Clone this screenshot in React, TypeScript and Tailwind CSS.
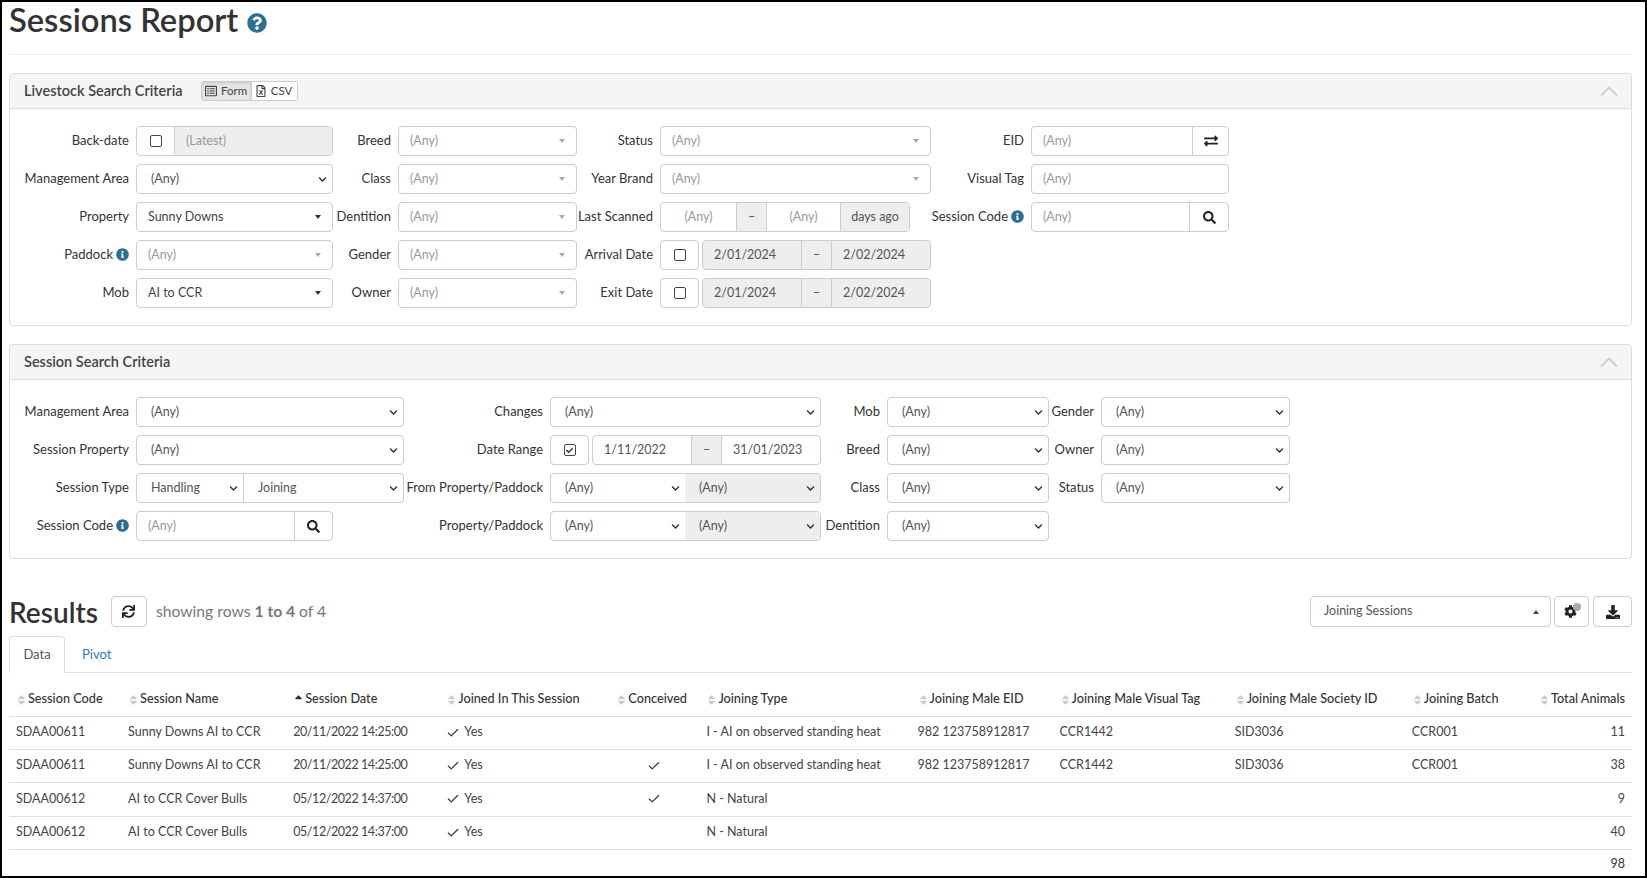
import type { ReactNode } from 'react';
import {
  FaCheck,
  FaChevronDown,
  FaCog,
  FaDownload,
  FaExchangeAlt,
  FaInfoCircle,
  FaQuestionCircle,
  FaRegFileExcel,
  FaRegListAlt,
  FaSearch,
  FaSort,
  FaSortUp,
  FaSync,
} from 'react-icons/fa';
import { Check } from 'lucide-react';

const box = 'h-[30px] border border-[#ccc] rounded-[4px] flex items-center text-[12.5px]';

function Label({ children, info }: { children: ReactNode; info?: boolean }) {
  return (
    <div className="h-[30px] flex items-center justify-end gap-[3px] pr-[7px] pb-[1px] text-[13px] text-[#333] whitespace-nowrap">
      {children}
      {info && <FaInfoCircle className="w-[13px] h-[13px] text-[#2e6f91]" />}
    </div>
  );
}

function Native({ value = '(Any)' }: { value?: string }) {
  return (
    <div className={`${box} bg-white justify-between pl-[14px] pr-[5px] text-[#555]`}>
      <span>{value}</span>
      <FaChevronDown className="w-[9px] h-[9px] text-[#333]" />
    </div>
  );
}

function Combo({ value, disabled }: { value?: string; disabled?: boolean }) {
  return (
    <div className={`${box} bg-white justify-between pl-[11px] pr-[11px]`}>
      <span className={value ? 'text-[#444]' : 'text-[#999]'}>{value ?? '(Any)'}</span>
      <span
        className={`w-0 h-0 border-x-[3.5px] border-x-transparent border-t-[4px] ${
          disabled || !value ? 'border-t-[#aaa]' : 'border-t-[#333]'
        }`}
      />
    </div>
  );
}

function Text({ placeholder = '(Any)' }: { placeholder?: string }) {
  return (
    <div className={`${box} bg-white px-[11px] text-[#999]`}>
      <span>{placeholder}</span>
    </div>
  );
}

function CheckBox({ checked }: { checked?: boolean }) {
  return (
    <span className="w-[12px] h-[12px] border border-[#444] rounded-[2px] flex items-center justify-center">
      {checked && <FaCheck className="w-[7px] h-[7px] text-[#333]" />}
    </span>
  );
}

function DateGroup({ from, to, disabled }: { from: string; to: string; disabled?: boolean }) {
  return (
    <div className={`${box} flex-1 text-[#555] overflow-hidden ${disabled ? 'bg-[#eee]' : 'bg-white'}`}>
      <span className="flex-1 pl-[11px]">{from}</span>
      <span className="w-[31px] h-full bg-[#eee] border-x border-[#ccc] flex items-center justify-center">–</span>
      <span className="flex-1 pl-[11px]">{to}</span>
    </div>
  );
}

function CheckDates({ from, to, checked, disabled }: { from: string; to: string; checked?: boolean; disabled?: boolean }) {
  return (
    <div className="flex gap-[3px]">
      <div className={`${box} bg-white w-[39px] justify-center shrink-0`}>
        <CheckBox checked={checked} />
      </div>
      <DateGroup from={from} to={to} disabled={disabled} />
    </div>
  );
}

function IconInput({ icon, addon }: { icon: ReactNode; addon: string }) {
  return (
    <div className={`${box} bg-white text-[#999]`}>
      <span className="flex-1 pl-[11px]">(Any)</span>
      <span className={`${addon} h-full border-l border-[#ccc] flex items-center justify-center text-[#222]`}>{icon}</span>
    </div>
  );
}

function SplitSelect({ left, right, split, rightDisabled }: { left: string; right: string; split: string; rightDisabled?: boolean }) {
  return (
    <div className={`${box} bg-white overflow-hidden text-[#555]`}>
      <div className={`${split} h-full flex items-center justify-between pl-[14px] pr-[5px]`}>
        <span>{left}</span>
        <FaChevronDown className="w-[9px] h-[9px] text-[#333]" />
      </div>
      <div className={`flex-1 h-full flex items-center justify-between pl-[14px] pr-[5px] ${rightDisabled ? 'bg-[#eee]' : 'border-l border-[#ccc]'}`}>
        <span>{right}</span>
        <FaChevronDown className="w-[9px] h-[9px] text-[#333]" />
      </div>
    </div>
  );
}

function Panel({ title, extra, children }: { title: string; extra?: ReactNode; children: ReactNode }) {
  return (
    <section className="border border-[#ddd] rounded-[4px] bg-white">
      <header className="h-[35px] bg-[#f5f5f5] border-b border-[#ddd] rounded-t-[4px] flex items-center pl-[14px] pr-[13px]">
        <h3 className="text-[14.5px] font-semibold text-[#444]">{title}</h3>
        {extra}
        <svg viewBox="0 0 18 10" className="ml-auto w-[18px] h-[10px] text-[#ccc]" fill="none" stroke="currentColor" strokeWidth="1.8">
          <path d="M1 9.5 9 1.5l8 8" />
        </svg>
      </header>
      {children}
    </section>
  );
}

const columns = [
  { label: 'Session Code', width: 'w-[112px]' },
  { label: 'Session Name', width: 'w-[165px]' },
  { label: 'Session Date', width: 'w-[153px]', sorted: true },
  { label: 'Joined In This Session', width: 'w-[170px]' },
  { label: 'Conceived', width: 'w-[90px]' },
  { label: 'Joining Type', width: 'w-[211px]' },
  { label: 'Joining Male EID', width: 'w-[142px]' },
  { label: 'Joining Male Visual Tag', width: 'w-[175px]' },
  { label: 'Joining Male Society ID', width: 'w-[177px]' },
  { label: 'Joining Batch', width: 'w-[121px]' },
  { label: 'Total Animals', width: 'w-[106px]', right: true },
];

const rows = [
  ['SDAA00611', 'Sunny Downs AI to CCR', '20/11/2022 14:25:00', false, 'I - AI on observed standing heat', '982 123758912817', 'CCR1442', 'SID3036', 'CCR001', '11'],
  ['SDAA00611', 'Sunny Downs AI to CCR', '20/11/2022 14:25:00', true, 'I - AI on observed standing heat', '982 123758912817', 'CCR1442', 'SID3036', 'CCR001', '38'],
  ['SDAA00612', 'AI to CCR Cover Bulls', '05/12/2022 14:37:00', true, 'N - Natural', '', '', '', '', '9'],
  ['SDAA00612', 'AI to CCR Cover Bulls', '05/12/2022 14:37:00', false, 'N - Natural', '', '', '', '', '40'],
] as const;

export default function App() {
  return (
    <div className="h-[878px] overflow-hidden border-2 border-black bg-white pl-[7px] pr-[13px] text-[#333] font-[family-name:Lato,sans-serif]">
      <div className="h-[53px] border-b border-[#eee] flex items-start">
        <h1 className="text-[32.7px] leading-[36px] font-semibold text-[#333]">Sessions Report</h1>
        <FaQuestionCircle className="ml-[9px] mt-[11px] w-[20px] h-[20px] text-[#2e6f91]" />
      </div>

      <div className="mt-[18px]">
        <Panel
          title="Livestock Search Criteria"
          extra={
            <div className="ml-[18px] h-[20px] flex border border-[#ccc] rounded-[3px] text-[11.5px] text-[#444] overflow-hidden">
              <span className="w-[50px] bg-[#e6e6e6] border-r border-[#ccc] flex items-center justify-center gap-[4px] shadow-[inset_0_1px_3px_rgba(0,0,0,0.15)]">
                <FaRegListAlt className="w-[12px] h-[12px]" /> Form
              </span>
              <span className="w-[45px] bg-white flex items-center justify-center gap-[5px]">
                <FaRegFileExcel className="w-[10px] h-[12px]" /> CSV
              </span>
            </div>
          }
        >
          <div className="grid grid-cols-[113px_197px_65px_179px_83px_271px_100px_198px] gap-y-[8px] pl-[13px] pt-[17px] pb-[17px]">
            <Label>Back-date</Label>
            <div className={`${box} bg-white overflow-hidden`}>
              <span className="w-[38px] h-full border-r border-[#ccc] flex items-center justify-center">
                <CheckBox />
              </span>
              <span className="flex-1 h-full bg-[#eee] flex items-center pl-[11px] text-[#999]">(Latest)</span>
            </div>
            <Label>Breed</Label>
            <Combo />
            <Label>Status</Label>
            <Combo />
            <Label>EID</Label>
            <IconInput icon={<FaExchangeAlt className="w-[14px] h-[14px]" />} addon="w-[36px]" />

            <Label>Management Area</Label>
            <Native />
            <Label>Class</Label>
            <Combo />
            <Label>Year Brand</Label>
            <Combo />
            <Label>Visual Tag</Label>
            <Text />

            <Label>Property</Label>
            <Combo value="Sunny Downs" />
            <Label>Dentition</Label>
            <Combo />
            <Label>Last Scanned</Label>
            <div className={`${box} bg-white w-[250px] text-[#999] overflow-hidden`}>
              <span className="w-[75px] text-center">(Any)</span>
              <span className="w-[31px] h-full bg-[#eee] border-x border-[#ccc] flex items-center justify-center text-[#555]">–</span>
              <span className="w-[73px] text-center">(Any)</span>
              <span className="flex-1 h-full bg-[#eee] border-l border-[#ccc] flex items-center justify-center text-[#555]">days ago</span>
            </div>
            <Label info>Session Code</Label>
            <IconInput icon={<FaSearch className="w-[13px] h-[13px]" />} addon="w-[39px]" />

            <Label info>Paddock</Label>
            <Combo disabled />
            <Label>Gender</Label>
            <Combo />
            <Label>Arrival Date</Label>
            <CheckDates from="2/01/2024" to="2/02/2024" disabled />
            <div className="col-span-2" />

            <Label>Mob</Label>
            <Combo value="AI to CCR" />
            <Label>Owner</Label>
            <Combo />
            <Label>Exit Date</Label>
            <CheckDates from="2/01/2024" to="2/02/2024" disabled />
          </div>
        </Panel>
      </div>

      <div className="mt-[18px]">
        <Panel title="Session Search Criteria">
          <div className="grid grid-cols-[113px_268px_146px_271px_66px_162px_52px_189px] gap-y-[8px] pl-[13px] pt-[17px] pb-[17px]">
            <Label>Management Area</Label>
            <Native />
            <Label>Changes</Label>
            <Native />
            <Label>Mob</Label>
            <Native />
            <Label>Gender</Label>
            <Native />

            <Label>Session Property</Label>
            <Native />
            <Label>Date Range</Label>
            <CheckDates from="1/11/2022" to="31/01/2023" checked />
            <Label>Breed</Label>
            <Native />
            <Label>Owner</Label>
            <Native />

            <Label>Session Type</Label>
            <SplitSelect left="Handling" right="Joining" split="w-[106px]" />
            <Label>From Property/Paddock</Label>
            <SplitSelect left="(Any)" right="(Any)" split="w-[134px]" rightDisabled />
            <Label>Class</Label>
            <Native />
            <Label>Status</Label>
            <Native />

            <Label info>Session Code</Label>
            <div className="w-[197px]">
              <IconInput icon={<FaSearch className="w-[13px] h-[13px]" />} addon="w-[38px]" />
            </div>
            <Label>Property/Paddock</Label>
            <SplitSelect left="(Any)" right="(Any)" split="w-[134px]" rightDisabled />
            <Label>Dentition</Label>
            <Native />
          </div>
        </Panel>
      </div>

      <div className="mt-[37px] h-[31px] flex items-center">
        <h2 className="text-[28px] font-semibold text-[#333]">Results</h2>
        <button className="ml-[13px] w-[36px] h-[31px] border border-[#ccc] rounded-[4px] flex items-center justify-center text-[#222]">
          <FaSync className="w-[13px] h-[13px]" />
        </button>
        <span className="ml-[9px] text-[15.7px] text-[#777]">
          showing rows <b>1 to 4</b> of 4
        </span>
        <div className="ml-auto w-[241px] h-[31px] border border-[#ccc] rounded-[4px] flex items-center justify-between pl-[13px] pr-[11px] text-[12.5px] text-[#555]">
          <span>Joining Sessions</span>
          <span className="w-0 h-0 border-x-[3.5px] border-x-transparent border-b-[4px] border-b-[#444]" />
        </div>
        <button className="relative ml-[3px] w-[35px] h-[31px] border border-[#ccc] rounded-[4px] flex items-center justify-center text-[#222]">
          <FaCog className="w-[13px] h-[13px] mr-[2px]" />
          <span className="absolute top-[6px] right-[7px] w-[8px] h-[8px] rounded-full bg-[#aaa]" />
        </button>
        <button className="ml-[4px] w-[39px] h-[31px] border border-[#ccc] rounded-[4px] flex items-center justify-center text-[#222]">
          <FaDownload className="w-[14px] h-[14px]" />
        </button>
      </div>

      <div className="mt-[9px] h-[37px] border-b border-[#ddd] flex text-[13px]">
        <span className="w-[56px] h-[37px] border border-[#ddd] border-b-white rounded-t-[4px] bg-white flex items-center justify-center text-[#555]">Data</span>
        <span className="ml-[17px] h-[37px] flex items-center text-[#337ab7]">Pivot</span>
      </div>

      <table className="w-full table-fixed border-collapse text-[12.5px]">
        <colgroup>
          {columns.map((c) => (
            <col key={c.label} className={c.width} />
          ))}
        </colgroup>
        <thead>
          <tr className="h-[43px] border-b border-[#ddd]">
            {columns.map((c) => (
              <th key={c.label} className={`px-[7px] pt-[9px] text-[12.7px] font-medium text-[#333] whitespace-nowrap ${c.right ? 'text-right' : 'text-left'}`}>
                {c.sorted ? (
                  <FaSortUp className="inline w-[11px] h-[12px] mr-[1px] text-[#333]" />
                ) : (
                  <FaSort className="inline w-[11px] h-[12px] mr-[1px] text-[#ccc]" />
                )}
                {c.label}
              </th>
            ))}
          </tr>
        </thead>
        <tbody>
          {rows.map((r, i) => (
            <tr key={i} className={`${i === 2 ? 'h-[34px]' : 'h-[33px]'} border-b border-[#ddd] text-[#444]`}>
              <td className="px-[7px] whitespace-nowrap">{r[0]}</td>
              <td className="px-[7px] whitespace-nowrap">{r[1]}</td>
              <td className="px-[7px] whitespace-nowrap tracking-[-0.42px]">{r[2]}</td>
              <td className="px-[7px] whitespace-nowrap">
                <Check className="inline w-[14px] h-[14px] mr-[4px] text-[#333]" />
                Yes
              </td>
              <td className="px-[7px] text-center">{r[3] && <Check className="inline w-[14px] h-[14px] text-[#333]" />}</td>
              <td className="px-[7px] whitespace-nowrap">{r[4]}</td>
              <td className="px-[7px] whitespace-nowrap">{r[5]}</td>
              <td className="px-[7px] whitespace-nowrap">{r[6]}</td>
              <td className="px-[7px] whitespace-nowrap">{r[7]}</td>
              <td className="px-[7px] whitespace-nowrap">{r[8]}</td>
              <td className="px-[7px] text-right">{r[9]}</td>
            </tr>
          ))}
          <tr className="h-[28px]">
            <td colSpan={10} />
            <td className="px-[7px] pt-[2px] text-right text-[#333]">98</td>
          </tr>
        </tbody>
      </table>
    </div>
  );
}
